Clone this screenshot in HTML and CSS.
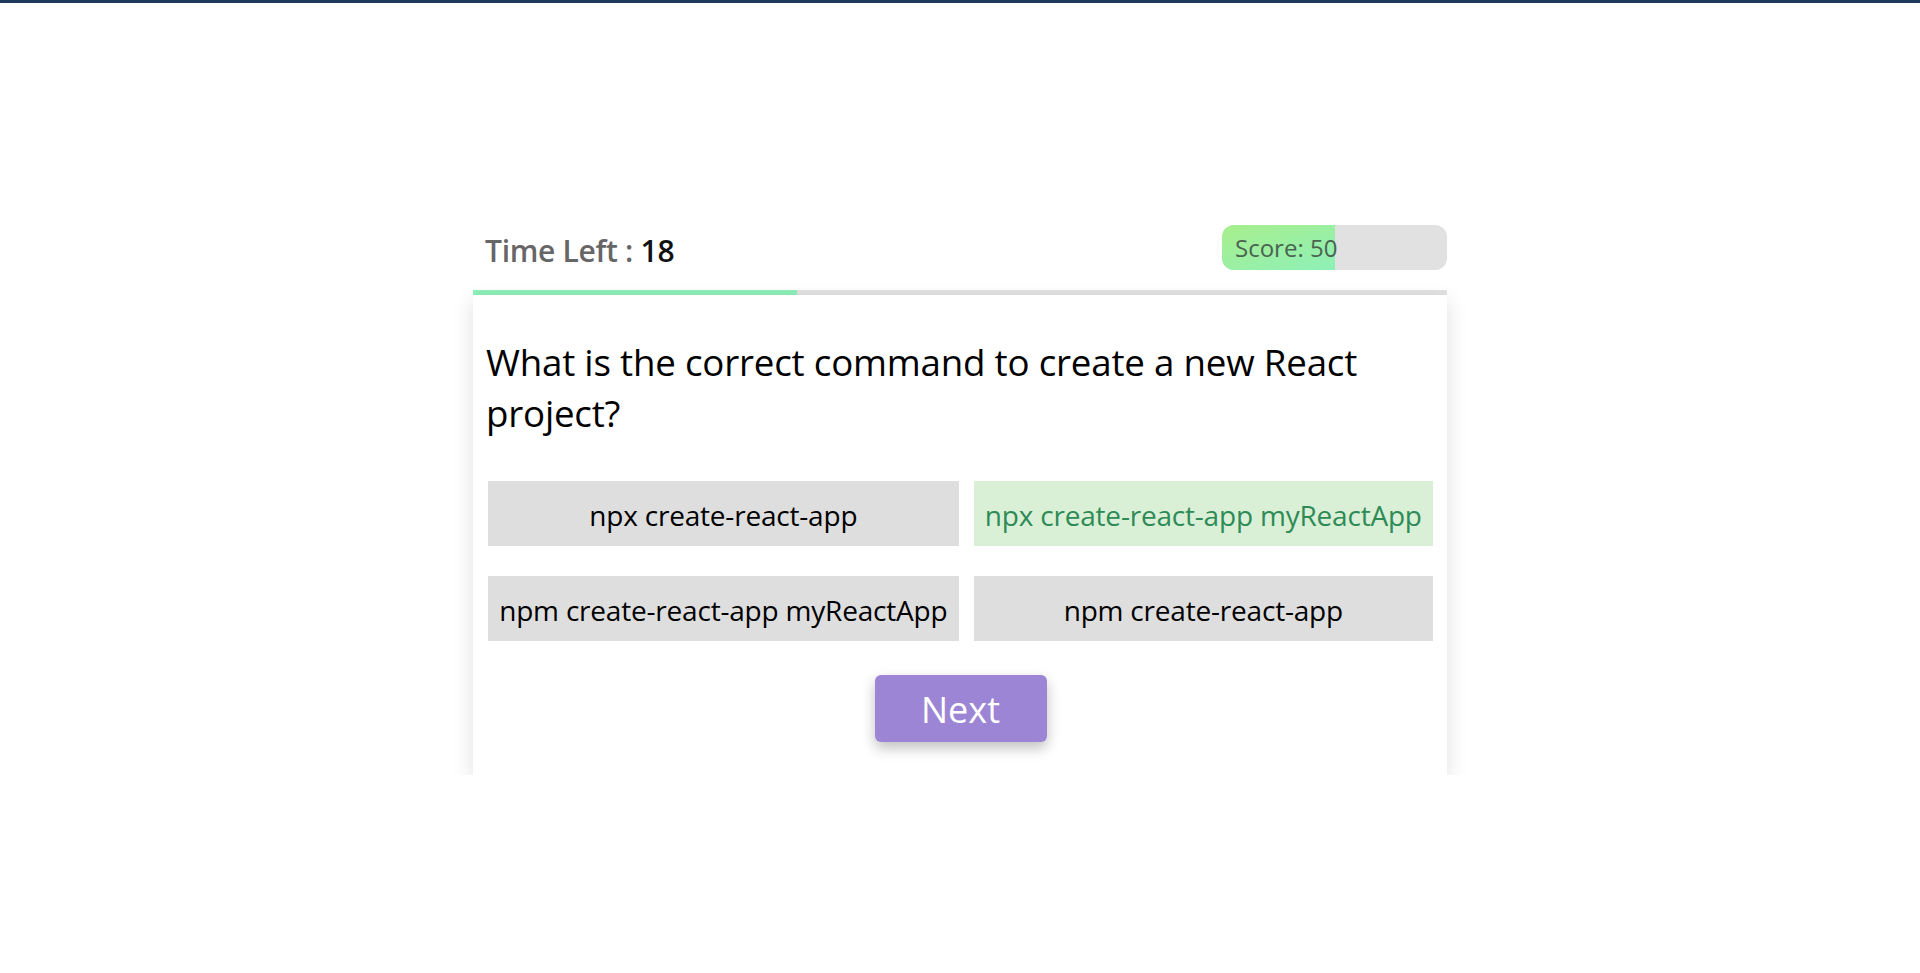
FILE: index.html
```html
<!DOCTYPE html>
<html lang="en">
<head>
<meta charset="utf-8">
<title>Quiz</title>
<link rel="stylesheet" href="styles.css">
</head>
<body>
<div class="topbar"></div>
<main class="quiz">
  <header class="quiz-header">
    <div class="timer">Time Left : <span class="timer-value">18</span></div>
    <div class="score">
      <div class="score-fill" style="width: 50%">Score: 50</div>
    </div>
  </header>
  <div class="progress"><div class="progress-fill" style="width: 33.3%"></div></div>
  <section class="card">
    <h2 class="question">What is the correct command to create a new React project?</h2>
    <div class="options">
      <button class="option">npx create-react-app</button>
      <button class="option correct">npx create-react-app myReactApp</button>
      <button class="option">npm create-react-app myReactApp</button>
      <button class="option">npm create-react-app</button>
    </div>
    <div class="actions">
      <button class="next">Next</button>
    </div>
  </section>
</main>
</body>
</html>
```

FILE: styles.css
```css
* { box-sizing: border-box; }
html, body { margin: 0; padding: 0; background: #fff; }
body {
  font-family: "Open Sans", "Noto Sans", sans-serif;
  color: #000;
}
.topbar {
  height: 3px;
  background: #1f3a5c;
}
.quiz {
  width: 974px;
  margin: 222px auto 0;
}
.quiz-header {
  display: flex;
  justify-content: space-between;
  align-items: center;
  height: 45px;
  padding-left: 12px;
  margin-bottom: 20px;
}
.timer {
  font-size: 30px;
  font-weight: 600;
  color: #666;
  letter-spacing: -0.3px;
  padding-top: 5px;
}
.timer-value { color: #111; font-weight: 600; }
.score {
  width: 225px;
  height: 45px;
  border-radius: 12px;
  background: #e1e1e1;
  overflow: visible;
}
.score-fill {
  height: 100%;
  border-radius: 12px 0 0 12px;
  background: linear-gradient(160deg, #a8ef8c 0%, #8ef0b8 100%);
  color: #4a6450;
  font-size: 24px;
  line-height: 45px;
  padding-left: 13px;
  white-space: nowrap;
}
.progress {
  height: 5px;
  background: #e2e2e2;
}
.progress-fill {
  height: 100%;
  background: #8ef0b9;
}
.card {
  background: #fff;
  box-shadow: 0 6px 20px rgba(0, 0, 0, 0.13);
  padding: 42px 14px 33px 15px;
}
.question {
  margin: 0 0 42px -2px;
  font-size: 36.7px;
  font-weight: 400;
  line-height: 51px;
  letter-spacing: -0.2px;
}
.options {
  display: grid;
  grid-template-columns: auto auto;
  gap: 30px 15px;
}
.option {
  height: 65px;
  border: none;
  background: #dedede;
  font-family: inherit;
  font-size: 28px;
  color: #000;
  padding: 2px 10px 0;
  white-space: nowrap;
  letter-spacing: -0.2px;
}
.option.correct {
  background: #daf0d6;
  color: #2e8b57;
}
.actions {
  display: flex;
  justify-content: center;
  margin-top: 34px;
}
.next {
  width: 172px;
  height: 67px;
  border: none;
  border-radius: 6px;
  background: #9d85d5;
  color: #fff;
  font-family: inherit;
  font-size: 36px;
  padding-top: 2px;
  box-shadow: 0 6px 14px rgba(0, 0, 0, 0.25);
}
```
